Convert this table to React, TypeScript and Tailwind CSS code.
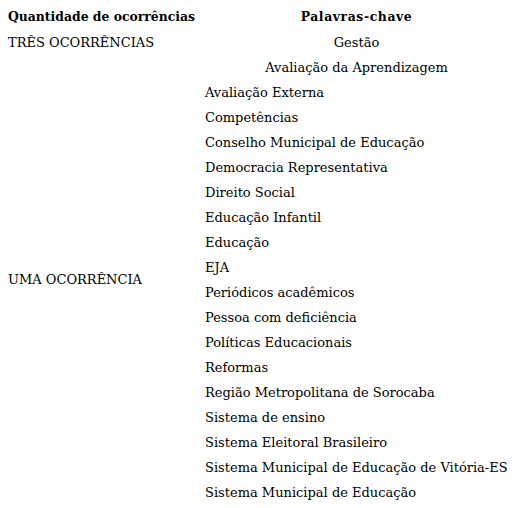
const left = [
  "Avaliação Externa",
  "Competências",
  "Conselho Municipal de Educação",
  "Democracia Representativa",
  "Direito Social",
  "Educação Infantil",
  "Educação",
  "EJA",
  "Periódicos acadêmicos",
  "Pessoa com deficiência",
  "Políticas Educacionais",
  "Reformas",
  "Região Metropolitana de Sorocaba",
  "Sistema de ensino",
  "Sistema Eleitoral Brasileiro",
  "Sistema Municipal de Educação de Vitória-ES",
  "Sistema Municipal de Educação",
];

export default function App() {
  return (
    <div className="w-[516px] h-[508px] bg-white pt-[5px] text-black font-['DejaVu_Serif',serif] text-[13px]">
      <div className="grid grid-cols-[197px_1fr] auto-rows-[25px]">
        <div className="flex items-center pl-2 font-bold text-[12.4px]">Quantidade de ocorrências</div>
        <div className="flex items-center justify-center font-bold text-[12.4px] tracking-[0.6px]">Palavras-chave</div>
        <div className="flex items-center pl-2">TRÊS OCORRÊNCIAS</div>
        <div className="flex items-center justify-center">Gestão</div>
        <div className="row-span-18 flex items-center pl-2">UMA OCORRÊNCIA</div>
        <div className="flex items-center justify-center">Avaliação da Aprendizagem</div>
        {left.map((t) => (
          <div key={t} className="flex items-center pl-2">
            {t}
          </div>
        ))}
      </div>
    </div>
  );
}
